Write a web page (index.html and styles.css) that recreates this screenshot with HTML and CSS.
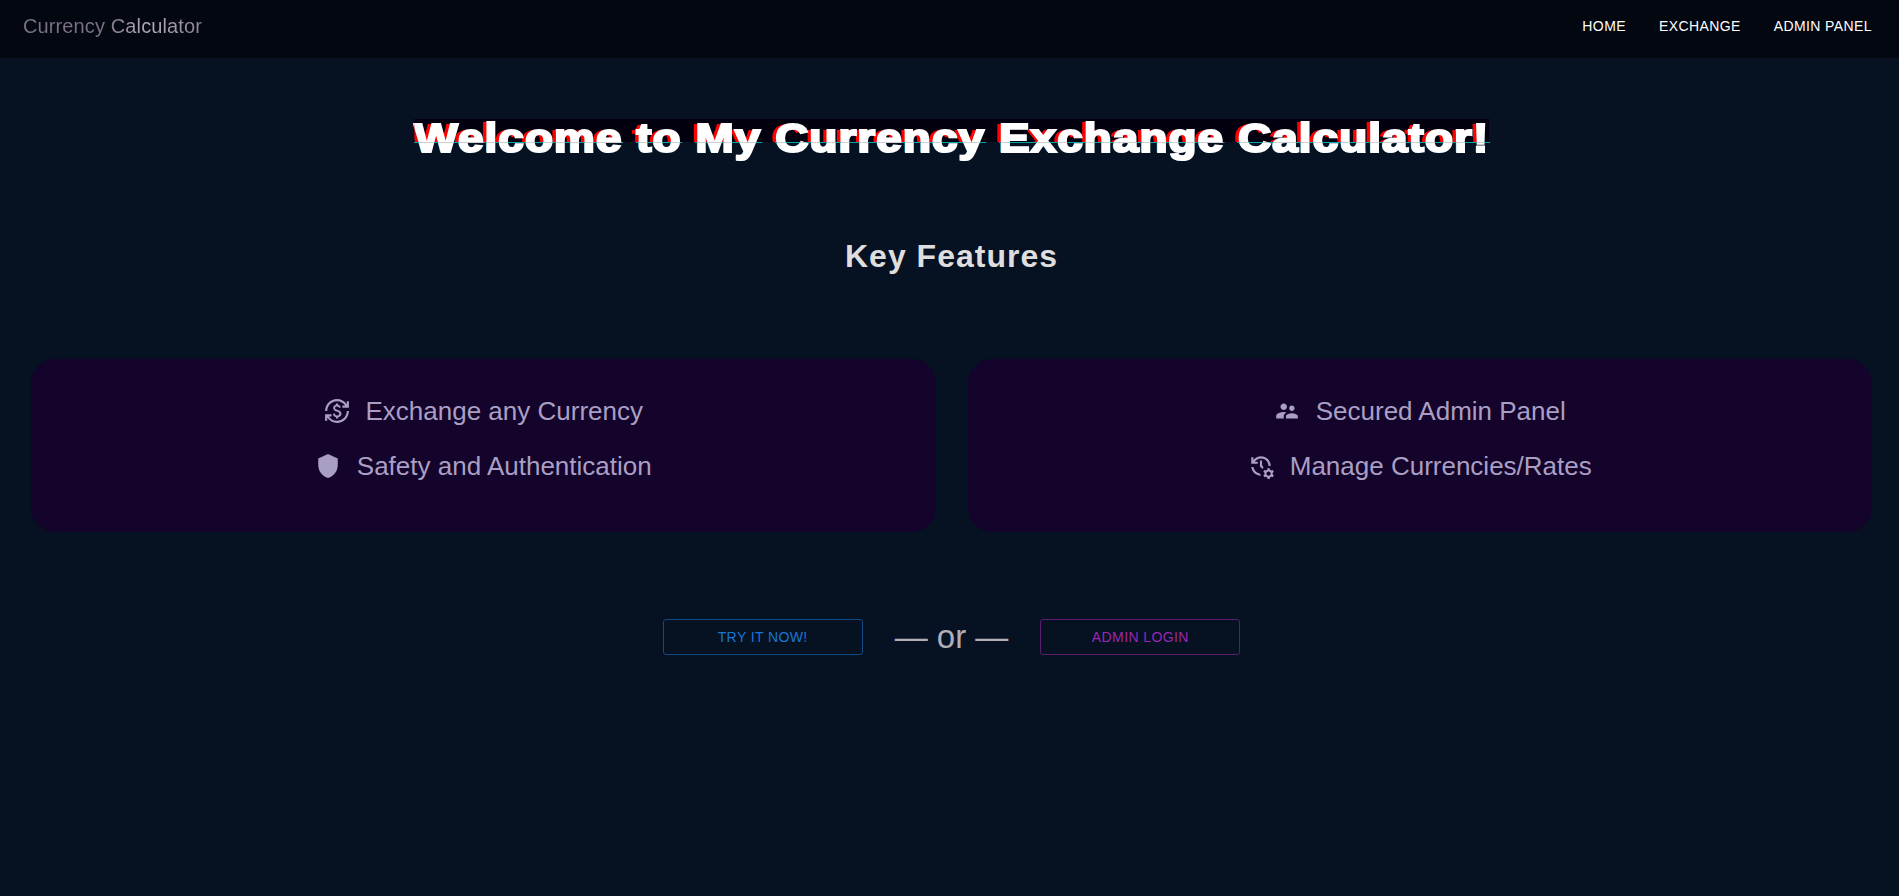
FILE: index.html
```html
<!DOCTYPE html>
<html lang="en">
<head>
<meta charset="utf-8">
<title>Currency Calculator</title>
<link rel="stylesheet" href="styles.css">
</head>
<body>
<header class="navbar">
  <span class="brand">Currency Calculator</span>
  <nav class="nav-links">
    <a class="nav-link" href="#">Home</a>
    <a class="nav-link" href="#">Exchange</a>
    <a class="nav-link" href="#">Admin Panel</a>
  </nav>
</header>
<main class="main">
  <h1 class="glitch" data-text="Welcome to My Currency Exchange Calculator!"><span class="word">Welcome</span> <span class="word">to</span> <span class="word">My</span> <span class="word">Currency</span> <span class="word">Exchange</span> <span class="word">Calculator!</span></h1>
  <h2 class="features-title">Key Features</h2>
  <section class="cards">
    <div class="card">
      <div class="feature">
        <svg class="icon" viewBox="0 0 24 24"><path d="M12.89 11.1c-1.78-.59-2.64-.96-2.64-1.9 0-1.02 1.11-1.39 1.81-1.39 1.31 0 1.79.99 1.9 1.34l1.58-.67c-.15-.45-.82-1.92-2.54-2.24V5h-2v1.26c-2.48.56-2.49 2.86-2.49 2.96 0 2.27 2.25 2.91 3.35 3.31 1.58.56 2.28 1.07 2.28 2.03 0 1.13-1.05 1.61-1.98 1.61-1.82 0-2.34-1.87-2.4-2.09l-1.66.67c.63 2.19 2.28 2.78 3.02 2.96V19h2v-1.24c.52-.09 3.02-.59 3.02-3.22.01-1.39-.6-2.61-3.25-3.44zM3 21H1v-6h6v2H4.52c1.61 2.41 4.36 4 7.48 4 4.97 0 9-4.03 9-9h2c0 6.08-4.92 11-11 11-3.72 0-7.01-1.85-9-4.67V21zm-2-9C1 5.92 5.92 1 12 1c3.72 0 7.01 1.85 9 4.67V3h2v6h-6V7h2.48C17.87 4.59 15.12 3 12 3c-4.97 0-9 4.03-9 9H1z"/></svg>
        <span>Exchange any Currency</span>
      </div>
      <div class="feature">
        <svg class="icon" viewBox="0 0 24 24"><path d="M12 1 3 5v6c0 5.55 3.84 10.74 9 12 5.16-1.26 9-6.45 9-12V5l-9-4z"/></svg>
        <span>Safety and Authentication</span>
      </div>
    </div>
    <div class="card">
      <div class="feature">
        <svg class="icon" viewBox="0 0 24 24"><path d="M16.5 12c1.38 0 2.49-1.12 2.49-2.5S17.88 7 16.5 7C15.12 7 14 8.12 14 9.5s1.12 2.5 2.5 2.5zM9 11c1.66 0 2.99-1.34 2.99-3S10.66 5 9 5C7.34 5 6 6.34 6 8s1.34 3 3 3zm7.5 3c-1.83 0-5.5.92-5.5 2.75V19h11v-2.25c0-1.83-3.67-2.75-5.5-2.75zM9 13c-2.33 0-7 1.17-7 3.5V19h7v-2.25c0-.85.33-2.34 2.37-3.47C10.5 13.1 9.66 13 9 13z"/></svg>
        <span>Secured Admin Panel</span>
      </div>
      <div class="feature">
        <svg class="icon" viewBox="0 0 24 24"><path d="m22.69 18.37 1.14-1-1-1.73-1.45.49c-.32-.27-.68-.48-1.08-.63L20 14h-2l-.3 1.49c-.4.15-.76.36-1.08.63l-1.45-.49-1 1.73 1.14 1c-.08.5-.08.76 0 1.26l-1.14 1 1 1.73 1.45-.49c.32.27.68.48 1.08.63L18 24h2l.3-1.49c.4-.15.76-.36 1.08-.63l1.45.49 1-1.73-1.14-1c.08-.51.08-.77 0-1.27zM19 21c-1.1 0-2-.9-2-2s.9-2 2-2 2 .9 2 2-.9 2-2 2zM11 7v5.41l2.36 2.36 1.04-1.79-1.4-1.39V7h-2zm10 5c0-4.97-4.03-9-9-9-2.83 0-5.35 1.32-7 3.36V4H3v6h6V8H6.26C7.53 6.19 9.63 5 12 5c3.86 0 7 3.14 7 7h2zm-10.14 6.91c-2.99-.49-5.35-2.9-5.78-5.91H3.06c.5 4.5 4.31 8 8.94 8h.07l-1.21-2.09z"/></svg>
        <span>Manage Currencies/Rates</span>
      </div>
    </div>
  </section>
  <div class="actions">
    <a class="btn btn-blue" href="#">Try it now!</a>
    <span class="or">— or —</span>
    <a class="btn btn-purple" href="#">Admin Login</a>
  </div>
</main>
</body>
</html>
```

FILE: styles.css
```css
* { box-sizing: border-box; }

html, body { margin: 0; height: 100%; }

body {
  background: #061122;
  font-family: "Liberation Sans", Arial, sans-serif;
  color: #fff;
  overflow: hidden;
}

.navbar {
  height: 58px;
  background: #020710;
  display: flex;
  align-items: center;
  justify-content: space-between;
  padding: 0 27px 6px 23px;
}

.brand {
  font-size: 20px;
  letter-spacing: 0.12px;
  color: transparent;
  background: linear-gradient(90deg, #7c7087 0%, #7c7087 44%, #b3abba 70%, #8d8295 100%);
  -webkit-background-clip: text;
  background-clip: text;
}

.nav-links { display: flex; gap: 33px; }

.nav-link {
  font-size: 14px;
  letter-spacing: 0.4px;
  color: #fff;
  text-decoration: none;
  text-transform: uppercase;
}

.main {
  display: flex;
  flex-direction: column;
  align-items: center;
  padding: 55px 27px 0 31px;
}

.glitch {
  position: relative;
  margin: 0;
  font-size: 41px;
  line-height: 50px;
  font-weight: 700;
  color: #fff;
  -webkit-text-stroke: 2.2px #fff;
  letter-spacing: 0.93px;
  white-space: nowrap;
  text-shadow: -1.5px 0 #18b;
  transform: scaleX(1.12);
}

.word {
  position: relative;
  display: inline-block;
  background: linear-gradient(#0cc, #0cc) 0 29px / 100% 1px no-repeat;
}

.word::after {
  content: "";
  position: absolute;
  z-index: 2;
  top: 29px;
  left: 0;
  right: 0;
  height: 1px;
  background: #d0d0d0;
  mix-blend-mode: multiply;
}

.glitch::before {
  content: attr(data-text);
  position: absolute;
  z-index: 1;
  top: 0;
  left: 0;
  width: 100%;
  background: #02000f;
  text-shadow: -4.2px 0 #f00;
  clip-path: inset(6px 0 21px 0);
}

.features-title {
  margin: 75px 0 0;
  font-size: 32px;
  line-height: 37px;
  font-weight: 700;
  letter-spacing: 1px;
  color: #dedede;
}

.cards {
  align-self: stretch;
  display: grid;
  grid-template-columns: 1fr 1fr;
  gap: 32px;
  margin-top: 84px;
}

.card {
  height: 173px;
  background: #14032a;
  border-radius: 24px;
  padding-top: 36px;
  display: flex;
  flex-direction: column;
  align-items: center;
  gap: 22px;
}

.feature {
  display: flex;
  align-items: center;
  gap: 16px;
  font-size: 26px;
  line-height: 33px;
  color: #a99fc4;
}

.icon {
  width: 26px;
  height: 26px;
  margin-bottom: 2px;
  fill: #a99fc4;
  flex: none;
}

.actions {
  display: flex;
  align-items: center;
  gap: 32px;
  margin-top: 86px;
}

.btn {
  width: 200px;
  height: 36px;
  display: flex;
  align-items: center;
  justify-content: center;
  font-size: 14px;
  letter-spacing: 0.4px;
  text-transform: uppercase;
  text-decoration: none;
  border-radius: 3px;
  border: 1px solid;
}

.btn-blue { color: #1976d2; border-color: #0f4a85; }
.btn-purple { color: #9c27b0; border-color: #5a1d72; }

.or {
  font-size: 33px;
  color: #b3adb8;
}
```
